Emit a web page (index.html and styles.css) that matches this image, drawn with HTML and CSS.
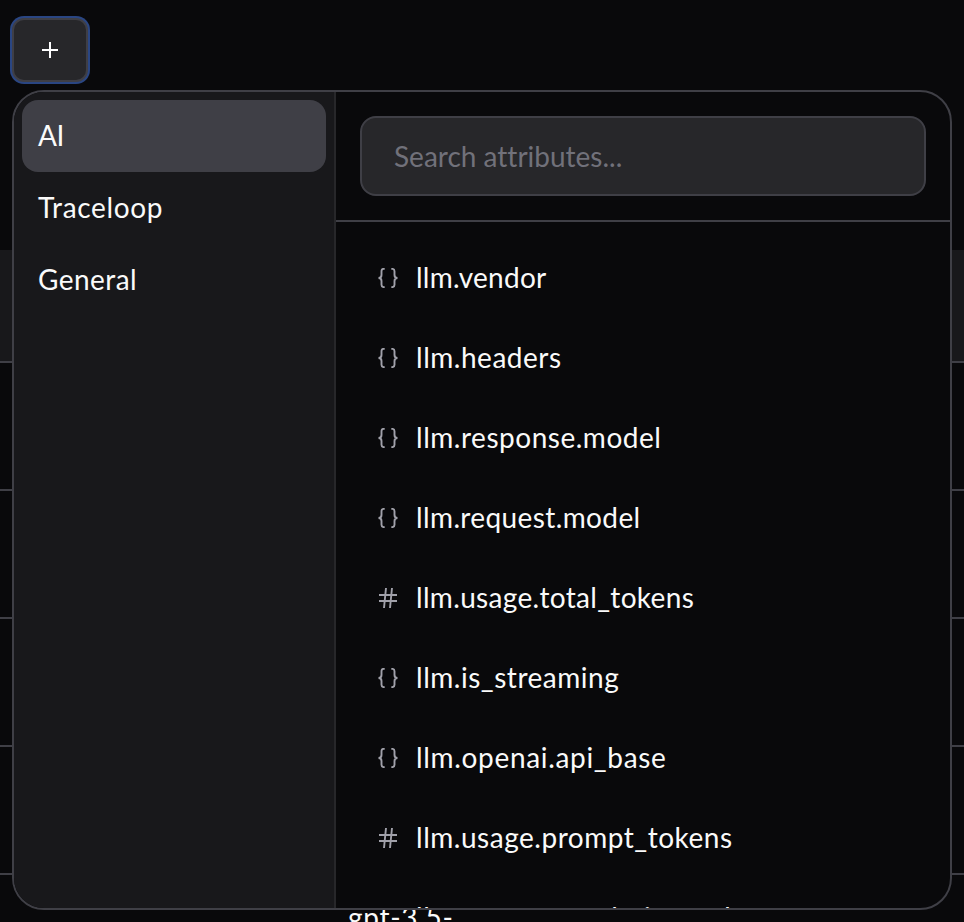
FILE: index.html
```html
<!DOCTYPE html>
<html lang="en">
<head>
<meta charset="utf-8">
<title>Attributes</title>
<link rel="stylesheet" href="styles.css">
</head>
<body>
<svg class="symbols" aria-hidden="true">
  <symbol id="braces" viewBox="0 0 20 20"><path d="M6.7.9H5.8Q3.5.9 3.5 3.2V7.1Q3.5 10 .5 10Q3.5 10 3.5 12.9V16.8Q3.5 19.1 5.8 19.1H6.7M13.3.9h.9q2.3 0 2.3 2.3v3.9q0 2.9 3 2.9q-3 0-3 2.9v3.9q0 2.3-2.3 2.3h-.9"/></symbol>
  <symbol id="hash" viewBox="0 0 20 20"><path d="M1 7h18M1 13h18M8 0L6 20M14 0L12 20"/></symbol>
</svg>
<div class="screen">
  <div class="toolbar">
    <button class="add" aria-label="Add"><svg viewBox="0 0 16 16"><path d="M8 0v16M0 8h16"/></svg></button>
  </div>
  <div class="table">
    <div class="table-head"></div>
    <div class="table-row"></div>
    <div class="table-row"></div>
    <div class="table-row"></div>
    <div class="table-row"></div>
    <div class="table-row last"><span class="cell">gpt-3.5-</span></div>
  </div>
  <div class="popover">
    <nav class="categories">
      <div class="category active">AI</div>
      <div class="category">Traceloop</div>
      <div class="category general">General</div>
    </nav>
    <section class="attributes">
      <div class="search"><input type="text" placeholder="Search attributes..."></div>
      <ul class="list">
        <li><svg><use href="#braces"/></svg><span>llm.vendor</span></li>
        <li><svg><use href="#braces"/></svg><span>llm.headers</span></li>
        <li><svg><use href="#braces"/></svg><span>llm.response.model</span></li>
        <li><svg><use href="#braces"/></svg><span>llm.request.model</span></li>
        <li><svg><use href="#hash"/></svg><span>llm.usage.total_tokens</span></li>
        <li><svg><use href="#braces"/></svg><span>llm.is_streaming</span></li>
        <li><svg><use href="#braces"/></svg><span>llm.openai.api_base</span></li>
        <li><svg><use href="#hash"/></svg><span>llm.usage.prompt_tokens</span></li>
        <li><svg><use href="#hash"/></svg><span>llm.usage.completion_tokens</span></li>
      </ul>
    </section>
  </div>
</div>
</body>
</html>
```
FILE: styles.css
```css
* { box-sizing: border-box; }

body {
  margin: 0;
  background: #09090b;
  color: #fafafa;
  font: 28px/40px Lato, "Liberation Sans", sans-serif;
  font-variant-ligatures: none;
}

.symbols { display: none; }

.screen {
  position: relative;
  height: 922px;
  overflow: hidden;
}

.toolbar {
  height: 250px;
  padding: 18px 12px;
}

.add {
  display: flex;
  align-items: center;
  justify-content: center;
  width: 76px;
  height: 64px;
  padding: 0;
  background: #27272a;
  border: 2px solid #3f3f46;
  border-radius: 12px;
  box-shadow: 0 0 0 2px #2a4683;
}

.add svg {
  width: 16px;
  height: 16px;
  stroke: #fff;
  stroke-width: 2;
}

.table-head {
  height: 113px;
  background: #18181b;
  border-bottom: 2px solid #3f3f46;
}

.table-row {
  height: 128px;
  border-bottom: 2px solid #3f3f46;
}

.table-row.last {
  padding: 22px 0 0 348px;
  border: 0;
}

.cell {
  display: block;
  letter-spacing: 0.7px;
}

.popover {
  position: absolute;
  top: 90px;
  left: 12px;
  display: flex;
  width: 940px;
  height: 820px;
  overflow: hidden;
  background: #09090b;
  border: 2px solid #3f3f46;
  border-radius: 32px;
}

.categories {
  width: 322px;
  padding: 8px;
  background: #18181b;
  border-right: 2px solid #27272a;
}

.category {
  height: 72px;
  padding: 15px 16px 17px;
  border-radius: 16px;
  letter-spacing: 0.63px;
}

.category.active {
  background: #3f3f46;
  letter-spacing: -0.5px;
}

.category.general { letter-spacing: 0.45px; }

.attributes { flex: 1; }

.search {
  height: 130px;
  padding: 24px;
  border-bottom: 2px solid #3f3f46;
}

.search input {
  display: block;
  width: 100%;
  height: 80px;
  padding: 0 32px;
  background: #27272a;
  border: 2px solid #3f3f46;
  border-radius: 16px;
  color: #fafafa;
  font: inherit;
  font-variant-ligatures: none;
}

.search input::placeholder { color: #71717a; opacity: 1; }

.list {
  margin: 0;
  padding: 16px;
  list-style: none;
}

.list li {
  display: flex;
  align-items: center;
  gap: 18px;
  height: 80px;
  padding: 0 26px;
}

.list svg {
  width: 20px;
  height: 20px;
  fill: none;
  stroke: #a1a1aa;
  stroke-width: 1.9;
}

.list span {
  padding-bottom: 2px;
  letter-spacing: 0.52px;
}

.list li:nth-child(1) span { letter-spacing: 0.23px; }
.list li:nth-child(4) span { letter-spacing: 0.38px; }
.list li:nth-child(5) span { letter-spacing: 0.32px; }
.list li:nth-child(7) span { letter-spacing: 0.67px; }
```
